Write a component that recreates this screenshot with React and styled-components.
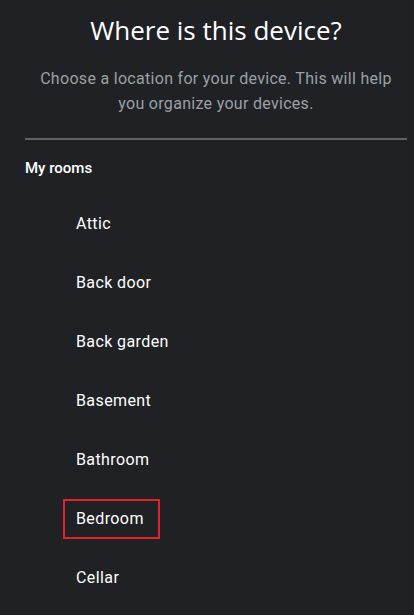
import styled, { createGlobalStyle } from 'styled-components';

const GlobalStyle = createGlobalStyle`
  html, body {
    margin: 0;
    padding: 0;
    background: #202124;
  }
  body {
    font-family: Roboto, "Noto Sans", sans-serif;
  }
`

const Page = styled.div`
  width: 414px;
  height: 615px;
  overflow: hidden;
  background: #202124;
  color: #e8eaed;
`

const Header = styled.div`
  display: flex;
  flex-direction: column;
  align-items: center;
  text-align: center;
  padding: 14px 6px 0 24px;
`

const Title = styled.h1`
  margin: 0;
  font-family: "Open Sans", Roboto, sans-serif;
  font-weight: 400;
  font-size: 26px;
  line-height: 32px;
  color: #ffffff;
`

const Subtitle = styled.p`
  margin: 20px 0 0;
  max-width: 360px;
  font-size: 16px;
  letter-spacing: 0.3px;
  line-height: 25px;
  color: #9aa0a6;
`

const Divider = styled.hr`
  margin: 22px 7px 0 25px;
  border: none;
  height: 2px;
  background: #5f6368;
`

const SectionLabel = styled.div`
  padding: 19px 25px 0;
  font-size: 15px;
  font-weight: 500;
  line-height: 18px;
  color: #ffffff;
`

const RoomList = styled.ul`
  list-style: none;
  margin: 17px 0 0;
  padding: 0;
`

const Room = styled.li`
  height: 59px;
  display: flex;
  align-items: center;
  padding-left: 63px;
`

const RoomName = styled.span`
  display: inline-flex;
  align-items: center;
  height: 36px;
  padding: 0 14px 0 11px;
  font-size: 16px;
  letter-spacing: 0.4px;
  color: #ffffff;
  border: 2px solid ${props => props.$selected ? '#e3232c' : 'transparent'};
`

const rooms = ['Attic', 'Back door', 'Back garden', 'Basement', 'Bathroom', 'Bedroom', 'Cellar']

function App() {
  return (
    <Page>
      <GlobalStyle />
      <Header>
        <Title>Where is this device?</Title>
        <Subtitle>Choose a location for your device. This will help you organize your devices.</Subtitle>
      </Header>
      <Divider />
      <SectionLabel>My rooms</SectionLabel>
      <RoomList>
        {rooms.map(r => (
          <Room key={r}>
            <RoomName $selected={r === 'Bedroom'}>{r}</RoomName>
          </Room>
        ))}
      </RoomList>
    </Page>
  )
}

export default App
